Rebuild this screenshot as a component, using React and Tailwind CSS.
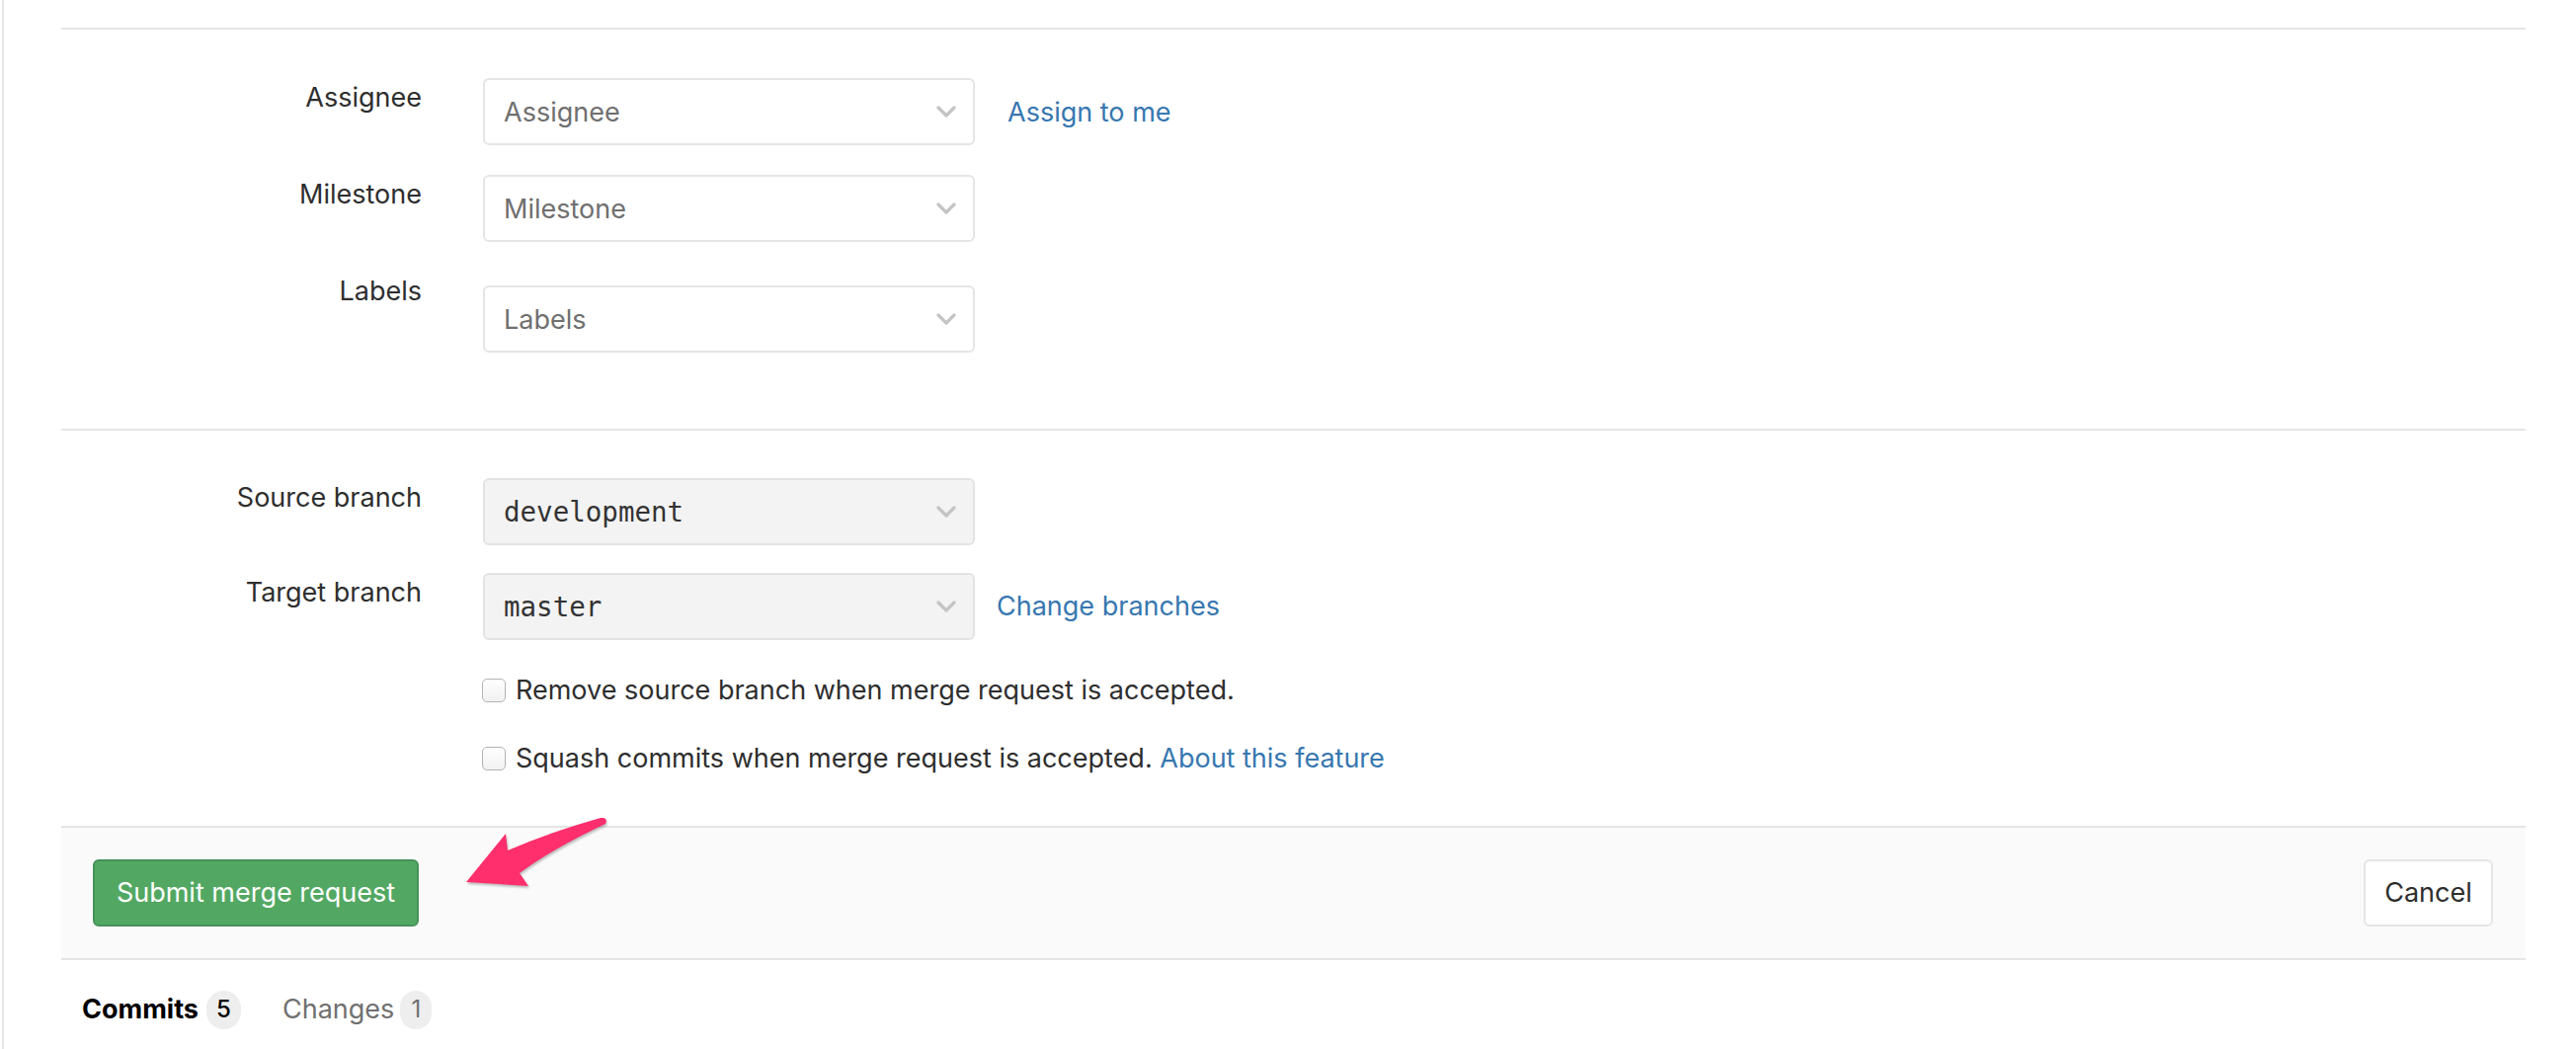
import React from "react";

const Chevron = () => (
  <svg width="20" height="12" viewBox="0 0 20 12" className="shrink-0">
    <polyline points="2,2 10,10 18,2" fill="none" stroke="#c4c4c4" strokeWidth="3.2" strokeLinecap="round" strokeLinejoin="round" />
  </svg>
);

const Select = ({ text, mono, grey, className = "" }) => (
  <div
    className={
      "w-[498px] h-[68px] rounded-[6px] border-2 flex items-center justify-between pl-[19px] pr-[17px] " +
      (grey ? "bg-[#f3f3f3] border-[#e3e3e3] " : "bg-white border-[#e5e5e5] ") +
      className
    }
  >
    {mono ? (
      <span className="text-[27.5px] text-[#333] pt-[2px]" style={{ fontFamily: '"DejaVu Sans Mono", monospace' }}>
        {text}
      </span>
    ) : (
      <span className="text-[27px] text-[#6f6f6f] pt-[2px]">{text}</span>
    )}
    <Chevron />
  </div>
);

const Label = ({ children }) => (
  <div className="w-[365px] shrink-0 text-right leading-[40px] text-[27px] text-[#2e2e2e]">{children}</div>
);

const Checkbox = () => (
  <span className="inline-block w-[24px] h-[24px] rounded-[5px] border-[1.5px] border-[#b3b3b3] bg-linear-to-b from-white to-[#f1f1f1] shrink-0" />
);

export default function App() {
  return (
    <div className="pl-[2px] bg-white" style={{ fontFamily: 'Inter, "Noto Sans", sans-serif' }}>
      <div className="border-l-2 border-[#e5e5e5] min-h-[1062px] pl-[58px]">
        <div className="w-[2495px] relative">
          <div className="pt-[28px]">
            <div className="border-t-2 border-[#e5e5e5]" />
          </div>

          <div className="pt-[49px] pb-[77px]">
            <div className="flex items-start">
              <Label>Assignee</Label>
              <div className="ml-[62px] flex items-center">
                <Select text="Assignee" />
                <a className="ml-[33px] text-[27px] text-[#3777b0] pt-[2px]">Assign to me</a>
              </div>
            </div>
            <div className="flex items-start mt-[30px]">
              <Label>Milestone</Label>
              <div className="ml-[62px]">
                <Select text="Milestone" />
              </div>
            </div>
            <div className="flex items-start mt-[30px]">
              <Label>Labels</Label>
              <div className="ml-[62px] pt-[14px]">
                <Select text="Labels" />
              </div>
            </div>
          </div>

          <div className="border-t-2 border-[#e5e5e5]" />

          <div className="pt-[48px] pb-[48px]">
            <div className="flex items-start">
              <Label>Source branch</Label>
              <div className="ml-[62px]">
                <Select text="development" mono grey />
              </div>
            </div>
            <div className="flex items-start mt-[28px]">
              <Label>Target branch</Label>
              <div className="ml-[62px] flex items-center">
                <Select text="master" mono grey />
                <a className="ml-[22px] text-[27px] text-[#3777b0]">Change branches</a>
              </div>
            </div>
            <div className="ml-[426px] mt-[31px] flex items-center leading-[40px] text-[27px] text-[#2e2e2e]">
              <Checkbox />
              <span className="ml-[10px]">Remove source branch when merge request is accepted.</span>
            </div>
            <div className="ml-[426px] mt-[29px] flex items-center leading-[40px] text-[27px] text-[#2e2e2e]">
              <Checkbox />
              <span className="ml-[10px]">
                Squash commits when merge request is accepted. <a className="text-[#3777b0]">About this feature</a>
              </span>
            </div>
          </div>

          <div className="relative border-t-2 border-b-2 border-[#e5e5e5] bg-[#fafafa] px-[32px] py-[32px] flex items-center justify-between">
            <button className="h-[68px] w-[330px] rounded-[6px] bg-[#52a862] border-2 border-[#46915a] text-white text-[27px]">
              Submit merge request
            </button>
            <button className="h-[68px] w-[131px] rounded-[6px] bg-white border-2 border-[#e5e5e5] text-[#2e2e2e] text-[27px] mr-[1px]">
              Cancel
            </button>
            <svg
              className="absolute left-[378px] top-[-28px] drop-shadow-[1px_2px_1px_rgba(0,0,0,0.25)]"
              width="220"
              height="140"
              viewBox="0 0 220 140"
            >
              <path
                d="M 168 18 Q 176 17 173 24 Q 118 50 86 74 L 95 87 L 32 83 L 72 34 L 74 51 Q 118 32 168 18 Z"
                fill="#ff2e6c"
              />
            </svg>
          </div>

          <div className="flex items-center pl-[21px] pt-[30px] text-[27px]">
            <span className="font-bold text-black">Commits</span>
            <span className="ml-[8px] h-[39px] min-w-[35px] rounded-full bg-[#eeeeee] text-[24px] font-medium text-black flex items-center justify-center">5</span>
            <span className="ml-[42px] text-[#707070]">Changes</span>
            <span className="ml-[6px] h-[39px] min-w-[32px] rounded-full bg-[#eeeeee] text-[24px] text-[#707070] flex items-center justify-center">1</span>
          </div>
        </div>
      </div>
    </div>
  );
}
